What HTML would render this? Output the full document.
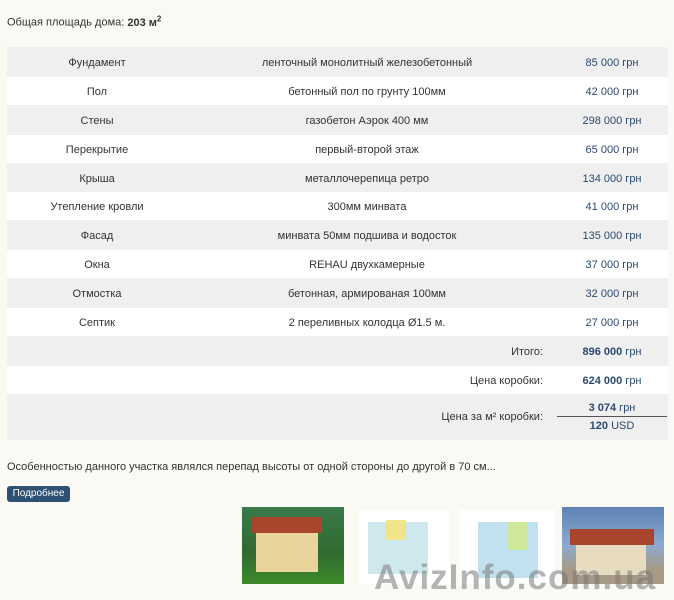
<!DOCTYPE html>
<html><head><meta charset="utf-8"><style>
body{margin:0;width:674px;height:600px;background:#faf9f4;font-family:"Liberation Sans",Arial,sans-serif;font-size:11px;color:#333;position:relative;overflow:hidden}
.a{position:absolute}
.tbl{left:7px;top:47px;width:661px;height:393px;background:#efefef;border-radius:3px}
.row{position:absolute;left:7px;width:661px;height:28px}
.w{background:#fff}
.c1,.c2,.c3{position:absolute;top:1px;line-height:28px;text-align:center}
.c1{left:0;width:180px}.c2{left:180px;width:360px}.c3{left:555px;width:100px;color:#2a4a72}
.lab{position:absolute;right:125px;line-height:28px;top:1px}
.val{position:absolute;left:555px;width:100px;text-align:center;line-height:28px;color:#2a4a72;top:1px}
b{font-weight:bold}
</style></head><body>
<div class="a" style="left:7px;top:14px">Общая площадь дома: <b>203 м<sup style="font-size:8px">2</sup></b></div>
<div class="a tbl"></div>
<div class="row" style="top:48px"><div class="c1">Фундамент</div><div class="c2">ленточный монолитный железобетонный</div><div class="c3">85 000 грн</div></div>
<div class="row w" style="top:77px"><div class="c1">Пол</div><div class="c2">бетонный пол по грунту 100мм</div><div class="c3">42 000 грн</div></div>
<div class="row" style="top:106px"><div class="c1">Стены</div><div class="c2">газобетон Аэрок 400 мм</div><div class="c3">298 000 грн</div></div>
<div class="row w" style="top:135px"><div class="c1">Перекрытие</div><div class="c2">первый-второй этаж</div><div class="c3">65 000 грн</div></div>
<div class="row" style="top:164px"><div class="c1">Крыша</div><div class="c2">металлочерепица ретро</div><div class="c3">134 000 грн</div></div>
<div class="row w" style="top:192px"><div class="c1">Утепление кровли</div><div class="c2">300мм минвата</div><div class="c3">41 000 грн</div></div>
<div class="row" style="top:221px"><div class="c1">Фасад</div><div class="c2">минвата 50мм подшива и водосток</div><div class="c3">135 000 грн</div></div>
<div class="row w" style="top:250px"><div class="c1">Окна</div><div class="c2">REHAU двухкамерные</div><div class="c3">37 000 грн</div></div>
<div class="row" style="top:279px"><div class="c1">Отмостка</div><div class="c2">бетонная, армированая 100мм</div><div class="c3">32 000 грн</div></div>
<div class="row w" style="top:308px"><div class="c1">Септик</div><div class="c2">2 переливных колодца Ø1.5 м.</div><div class="c3">27 000 грн</div></div>
<div class="row" style="top:337px"><div class="lab">Итого:</div><div class="val"><b>896 000</b> грн</div></div>
<div class="row w" style="top:366px"><div class="lab">Цена коробки:</div><div class="val"><b>624 000</b> грн</div></div>
<div class="row" style="top:395px;height:45px"><div class="lab" style="line-height:45px;top:0">Цена за м² коробки:</div>
<div class="a" style="left:555px;width:100px;top:7px;text-align:center;color:#2a4a72"><b>3 074</b> грн</div>
<div class="a" style="left:550px;width:110px;top:21px;border-top:1px solid #555"></div>
<div class="a" style="left:555px;width:100px;top:25px;text-align:center;color:#2a4a72"><b>120</b> USD</div></div>
<div class="a" style="left:7px;top:461px">Особенностью данного участка являлся перепад высоты от одной стороны до другой в 70 см...</div>
<div class="a" style="left:7px;top:486px;width:63px;height:16px;background:#2d5073;color:#fff;border-radius:3px;font-size:10px;line-height:16px;text-align:center">Подробнее</div>
<div class="a" style="left:242px;top:507px;width:102px;height:77px;background:linear-gradient(#3a7a4a,#2f6a30 60%,#3d8a2a)"><div class="a" style="left:14px;top:20px;width:62px;height:45px;background:#e8d49a"></div><div class="a" style="left:10px;top:10px;width:70px;height:16px;background:#a8452c"></div></div>
<div class="a" style="left:358px;top:510px;width:92px;height:74px;background:#fff"><div class="a" style="left:10px;top:12px;width:60px;height:52px;background:#cfe8ee"></div><div class="a" style="left:28px;top:10px;width:20px;height:20px;background:#f0e58a"></div></div>
<div class="a" style="left:460px;top:510px;width:95px;height:74px;background:#fff"><div class="a" style="left:18px;top:12px;width:60px;height:56px;background:#bfe2ee"></div><div class="a" style="left:48px;top:12px;width:20px;height:28px;background:#cde89a"></div></div>
<div class="a" style="left:562px;top:507px;width:102px;height:77px;background:linear-gradient(#5d82b4,#8aaad0 50%,#a89a86 80%)"><div class="a" style="left:14px;top:36px;width:70px;height:32px;background:#e8dcc0"></div><div class="a" style="left:8px;top:22px;width:84px;height:16px;background:#a8452c"></div></div>
<div class="a" style="left:374px;top:558px;font-size:35px;font-weight:bold;color:rgba(120,120,120,.55);letter-spacing:1px;white-space:nowrap">AvizInfo.com.ua</div>
</body></html>
